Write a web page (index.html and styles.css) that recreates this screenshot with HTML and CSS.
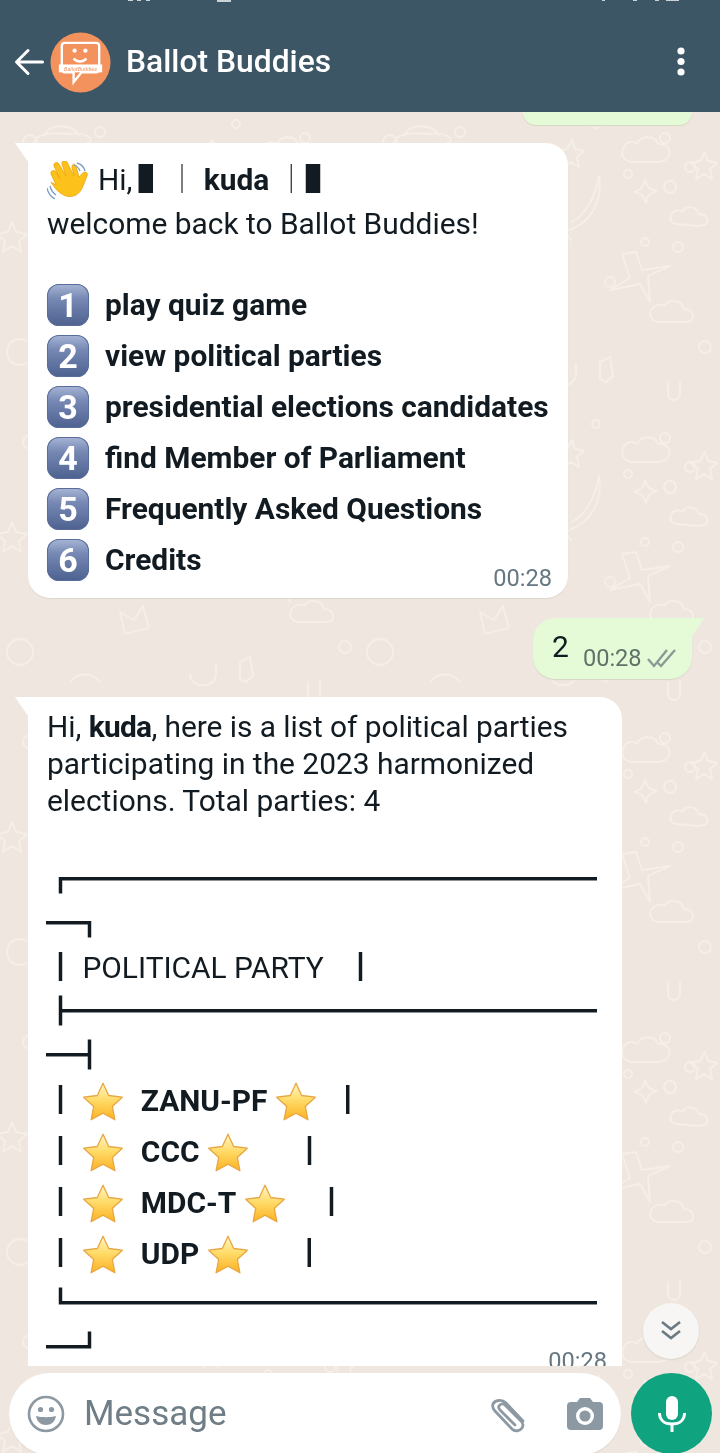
FILE: index.html
```html
<!DOCTYPE html>
<html lang="en">
<head>
<meta charset="utf-8">
<title>Ballot Buddies</title>
<link rel="stylesheet" href="styles.css">
</head>
<body>
<svg class="defs" width="0" height="0" aria-hidden="true">
  <defs>
    <linearGradient id="starFill" x1="0" y1="0" x2="0" y2="1">
      <stop offset="0" stop-color="#fff6c9"/><stop offset=".45" stop-color="#ffdc6a"/><stop offset="1" stop-color="#fcb124"/>
    </linearGradient>
    <symbol id="star" viewBox="0 0 51 40">
      <path d="M21 1.200 L26.700 13.500 L40.300 15.200 L30.300 24.400 L32.900 37.800 L21 31.200 L9.100 37.800 L11.700 24.400 L1.700 15.200 L15.300 13.500 Z" fill="url(#starFill)" stroke="#e9a640" stroke-width="1.300" stroke-linejoin="round"/>
    </symbol>
    <pattern id="doodle" width="360" height="300" patternUnits="userSpaceOnUse">
      <g fill="none" stroke="#f5efe8" stroke-width="1.800" stroke-linejoin="round" stroke-linecap="round">
        <path d="M272 50c-7-1-12-6-9-13 2-7 9-9 14-5 4-9 18-9 21 0 8-1 13 5 11 11-2 5-6 7-11 7z"/>
        <path d="M212 28l3 9 9 2-7 6 2 10-8-5-8 5 2-10-7-6 9-2z"/>
        <path d="M345 40l3 9 9 2-7 6 2 10-8-5-8 5 2-10-7-6 9-2z"/>
        <path d="M285 68c3 8 4 9 12 11-8 3-9 4-11 12-3-8-4-9-12-11 8-3 9-4 11-12z"/>
        <circle cx="305" cy="26" r="5"/><circle cx="310" cy="75" r="6"/><circle cx="236" cy="12" r="4"/><circle cx="30" cy="30" r="7"/><circle cx="100" cy="20" r="5"/>
        <circle cx="268" cy="62" r="4"/><circle cx="330" cy="55" r="5"/><circle cx="285" cy="130" r="4"/><circle cx="318" cy="135" r="5"/>
        <path d="M212 110c14-8 24-26 27-46 4 22-6 46-30 54"/>
        <path d="M65 22c-10-2-25-1-30 6-4 7 12 12 30 10 16-2 28-7 25-12-3-4-14-5-25-4zM45 23c2-12 30-12 34 1"/>
        <path d="M318 112c-6 1-9-4-7-9 2-5 8-6 11-3 4-7 15-6 17 2 7 0 10 5 8 9-2 2-5 3-9 3z"/>
        <path d="M300 210c-7 0-12-5-9-12 3-5 9-7 13-4 6-8 18-6 20 3 7 0 11 6 8 11-2 2-5 2-9 2z"/>
        <path d="M262 142l8 24-20 12 30-6 10 18-2-26 22-10-28 4-6-18z"/>
        <circle cx="250" cy="170" r="5"/><circle cx="345" cy="235" r="6"/><circle cx="60" cy="180" r="6"/><circle cx="20" cy="240" r="13"/>
        <path d="M120 200l14 8 9-14 6 22-24 6z"/><path d="M240 250l10-5 3 19-7 6-6-3zM70 270c8-10 22-10 30 0"/>
        <path d="M190 262c0 15 26 15 26 0v-10M175 120c14-6 30-2 36 8"/>
        <path d="M12 110l4 10 11 2-8 7 2 11-9-6-9 6 2-11-8-7 11-2z"/><path d="M320 270v12c0 8-12 8-12 0v-12"/>
      </g>
    </pattern>
  </defs>
</svg>

<main class="phone">
  <svg class="wallpaper" width="720" height="1341" aria-hidden="true"><rect width="720" height="1341" fill="url(#doodle)"/></svg>

  <header class="appbar">
    <svg class="status" width="720" height="3" aria-hidden="true"><g fill="#c9d2d6"><rect x="128" y="0" width="5" height="1"/><rect x="137" y="0" width="4" height="1"/><rect x="146" y="0" width="4" height="1"/><rect x="217" y="0" width="14" height="2"/><rect x="602" y="0" width="3" height="1"/><rect x="633" y="0" width="4" height="1"/><rect x="655" y="0" width="4" height="1"/><rect x="666" y="0" width="13" height="1"/></g></svg>
    <div class="bar-row">
      <svg class="back" width="30" height="30" viewBox="0 0 30 30"><path d="M28.500 15H3M14 3.500 2.500 15 14 26.500" fill="none" stroke="#fff" stroke-width="3" stroke-linecap="round" stroke-linejoin="round"/></svg>
      <svg class="avatar" width="61" height="61" viewBox="0 0 62 62">
        <circle cx="31" cy="31" r="30.500" fill="#f3925c"/>
        <path d="M15 11h32a3 3 0 0 1 3 3v24a3 3 0 0 1-3 3H32l-8 10v-10h-9a3 3 0 0 1-3-3V14a3 3 0 0 1 3-3z" fill="none" stroke="#fff" stroke-width="2.400"/>
        <circle cx="25" cy="19" r="2.200" fill="#fff"/><circle cx="36" cy="19" r="2.200" fill="#fff"/>
        <path d="M24 27c3 4 10 4 13 0" fill="none" stroke="#fff" stroke-width="2.400"/>
        <rect x="9" y="33" width="44" height="8" fill="#fff"/>
        <text class="avatar-text" x="31" y="39.500" text-anchor="middle">BallotBuddies</text>
      </svg>
      <h1 class="title">Ballot Buddies</h1>
      <svg class="more" width="8" height="30" viewBox="0 0 8 30"><circle cx="4" cy="4" r="3.600" fill="#fff"/><circle cx="4" cy="14.500" r="3.600" fill="#fff"/><circle cx="4" cy="25" r="3.600" fill="#fff"/></svg>
    </div>
  </header>

  <section class="chat">
    <div class="bubble out stub"></div>

    <article class="bubble in menu">
      <div class="greet"><svg class="emoji" width="51" height="42" viewBox="2 0 51 42">
          <path d="M11 24 6 13c-1-3 3-5 5-2l4 7-6-13c-1-3 3-5 5-2l7 12-4-12c-1-3 3-4 5-2l7 14-2-9c-.5-3 3-4 4-1l3 11c2-2 4-5 6-5 2 0 3 2 2 4l-4 10c-3 8-9 12-17 10-6-2-11-7-15-14z" fill="#fcc21b" stroke="#e9a311" stroke-width=".800"/>
          <path d="M2 27c1 5 4 9 8 11M5 25c1 4 3 7 6 9M32 2c4 1 7 4 8 8M29 4c3 1 5 3 6 6" fill="none" stroke="#7d9cc4" stroke-width="1.300"/>
        </svg>Hi, <span class="box lead">▌│</span> <b>kuda</b> <span class="box">│▌</span></div>
      <div class="line">welcome back to Ballot Buddies!</div>
      <div class="line">&nbsp;</div>
      <div class="opt"><span class="key">1</span><b>play quiz game</b></div>
      <div class="opt"><span class="key">2</span><b>view political parties</b></div>
      <div class="opt"><span class="key">3</span><b>presidential elections candidates</b></div>
      <div class="opt"><span class="key">4</span><b>find Member of Parliament</b></div>
      <div class="opt"><span class="key">5</span><b>Frequently Asked Questions</b></div>
      <div class="opt"><span class="key">6</span><b>Credits</b></div>
      <time class="time">00:28</time>
    </article>

    <article class="bubble out reply">
      <span class="reply-text">2</span>
      <time class="time sent">00:28</time>
      <svg class="ticks" width="30" height="20" viewBox="0 0 30 20"><path d="M1 11l6 7L20 2M11 15l3 3L28 2" fill="none" stroke="#8b9a94" stroke-width="2.400"/></svg>
    </article>

    <article class="bubble in parties">
      <div class="line tight">Hi, <b>kuda</b>, here is a list of political parties</div>
      <div class="line">participating in the 2023 harmonized</div>
      <div class="line">elections. Total parties: 4</div>
      <div class="line gap">&nbsp;</div>
      <div class="tline"><span class="box">┏━━━━━━━━━━━━━━━━━━</span></div>
      <div class="tline"><span class="box">━┓</span></div>
      <div class="tline"><span class="box">┃</span> POLITICAL PARTY   <span class="box">┃</span></div>
      <div class="tline"><span class="box">┣━━━━━━━━━━━━━━━━━━</span></div>
      <div class="tline short"><span class="box">━┫</span></div>
      <div class="trow"><span class="box">┃</span> <svg class="emoji" width="51" height="40"><use href="#star"/></svg> <b>ZANU-PF</b> <svg class="emoji" width="51" height="40"><use href="#star"/></svg> <span class="box">┃</span></div>
      <div class="trow"><span class="box">┃</span> <svg class="emoji" width="51" height="40"><use href="#star"/></svg> <b>CCC</b> <svg class="emoji" width="51" height="40"><use href="#star"/></svg>     <span class="box">┃</span></div>
      <div class="trow"><span class="box">┃</span> <svg class="emoji" width="51" height="40"><use href="#star"/></svg> <b>MDC-T</b> <svg class="emoji" width="51" height="40"><use href="#star"/></svg>   <span class="box">┃</span></div>
      <div class="trow"><span class="box">┃</span> <svg class="emoji" width="51" height="40"><use href="#star"/></svg> <b>UDP</b> <svg class="emoji" width="51" height="40"><use href="#star"/></svg>     <span class="box">┃</span></div>
      <div class="tline"><span class="box">┗━━━━━━━━━━━━━━━━━━</span></div>
      <div class="tline"><span class="box">━┛</span></div>
      <time class="time clipped">00:28</time>
    </article>

    <button class="scroll-down" aria-label="Scroll to bottom">
      <svg width="24" height="24" viewBox="0 0 24 24"><path d="M3 3l9 7 9-7M3 12l9 7 9-7" fill="none" stroke="#6b7a82" stroke-width="2.600"/></svg>
    </button>
  </section>

  <footer class="composer">
    <div class="field">
      <svg class="smile" width="38" height="38" viewBox="0 0 38 38"><circle cx="19" cy="19" r="17" fill="none" stroke="#8c99a3" stroke-width="2.600"/><circle cx="13.500" cy="14.500" r="2.600" fill="#8c99a3"/><circle cx="24.500" cy="14.500" r="2.600" fill="#8c99a3"/><path d="M9 21c6 1.600 14 1.600 20 0-1 6-5 9-10 9s-9-3-10-9z" fill="#8c99a3"/></svg>
      <span class="placeholder">Message</span>
      <svg class="clip" width="38" height="38" viewBox="0 0 38 38"><path d="M34 26 17 8C13 4 6 5 4 9c-1 3 0 5 2 7l17 18c3 3 8 2 10-1s1-5-1-7L16 10c-2-2-5-1-6 1s0 3 1 4l15 15" fill="none" stroke="#8c99a3" stroke-width="2.800" stroke-linecap="round"/></svg>
      <svg class="camera" width="36" height="32" viewBox="0 0 36 32"><path d="M4 4h6l3-4h10l3 4h6a4 4 0 0 1 4 4v20a4 4 0 0 1-4 4H4a4 4 0 0 1-4-4V8a4 4 0 0 1 4-4z" fill="#8c99a3"/><circle cx="18" cy="18" r="9" fill="#fff"/><circle cx="18" cy="18" r="5.600" fill="#8c99a3"/></svg>
    </div>
    <button class="mic" aria-label="Record voice message">
      <svg width="28" height="36" viewBox="0 0 28 36"><rect x="8" y="0" width="12" height="24" rx="6" fill="#fff"/><path d="M1.500 17c0 7 5 11 12.500 11s12.500-4 12.500-11M14 28v8" fill="none" stroke="#fff" stroke-width="3"/></svg>
    </button>
  </footer>
</main>
</body>
</html>
```

FILE: styles.css
```css
* { box-sizing: border-box; }
html, body { margin: 0; padding: 0; }
body { font-family: Roboto, "Noto Sans CJK SC", sans-serif; color: #111b21; background: #efe7df; }
.defs { position: absolute; }

.phone { position: relative; width: 720px; height: 1453px; display: flex; flex-direction: column; overflow: hidden; background: #efe7df; }
.wallpaper { position: absolute; left: 0; top: 112px; z-index: 0; }

.appbar { position: relative; height: 112px; flex: none; background: #3d5665; color: #fff; z-index: 1; }
.status { display: block; height: 3px; margin-bottom: -3px; }
.bar-row { display: flex; align-items: center; height: 124px; padding: 0 35px 0 14px; will-change: transform; }
.back { flex: none; }
.avatar { flex: none; margin: 0 0 0 6px; }
.avatar-text { font: italic 5.600px Roboto, sans-serif; fill: #f3925c; }
.title { flex: 1; margin: 0 0 0 15px; font-size: 31.800px; font-weight: 500; line-height: 1; }
.more { flex: none; }

.chat { position: relative; z-index: 1; flex: none; height: 1254px; overflow: hidden; display: flex; flex-direction: column; will-change: transform; }
.bubble { position: relative; background: #fff; flex: none; }
.in { align-self: flex-start; margin-left: 28px; border-radius: 0 22px 22px 22px; }
.in::before { content: ""; position: absolute; left: -13px; top: 0; width: 14px; height: 20px; background: inherit; clip-path: polygon(0 0, 100% 0, 100% 100%); }
.out { align-self: flex-end; margin-right: 28px; background: #e5fbd8; }

.stub { width: 169px; height: 13px; border-radius: 0 0 20px 20px; box-shadow: 0 1px 1px #d8d5c4; }

.menu { width: 540px; height: 455px; margin-top: 18px; padding: 12px 16px 0 19px; box-shadow: 0 1px 1px #ddd6cd; }
.greet { height: 50px; line-height: 50px; font-size: 29.900px; white-space: pre; }
.line { height: 37px; line-height: 37px; font-size: 29.900px; white-space: pre; }
.line.tight { letter-spacing: -.06px; }
.line.tight b { letter-spacing: -.7px; }
.line.gap { height: 39px; }
.opt { display: flex; align-items: center; height: 51px; font-size: 29.900px; }
.opt b { font-weight: 700; }
.key { flex: none; width: 42px; height: 42px; margin-right: 16px; border-radius: 12px; background: linear-gradient(#a8b6d6 0, #7688b3 35%, #4d6190 100%); color: #fff; font-size: 34px; font-weight: 700; line-height: 42px; text-align: center; box-shadow: inset 0 0 0 1px #5a6d9a; }
.emoji { vertical-align: middle; }
.trow .emoji { margin-top: -2px; }
.greet .emoji { margin-top: 0; }
.box { font-family: "Noto Sans CJK SC", sans-serif; font-size: 29px; line-height: 1; font-weight: 400; }
.box.lead { margin-left: -1.500px; }

.time { display: block; text-align: right; font-size: 23.600px; line-height: 26px; color: #667781; margin-top: -20px; }

.reply { display: flex; align-items: flex-start; width: 159px; height: 61px; margin-top: 20px; padding: 0 15px 0 19px; border-radius: 22px 0 22px 22px; box-shadow: 0 1px 1px #d8d5c4; }
.reply::before { content: ""; position: absolute; right: -12px; top: 0; width: 13px; height: 20px; background: inherit; clip-path: polygon(0 0, 100% 0, 0 100%); }
.reply-text { font-size: 30px; line-height: 36px; margin-top: 11px; }
.time.sent { margin: 27px 0 0 14px; color: #5f7368; }
.ticks { margin: 30px 0 0 5px; flex: none; }

.parties { width: 594px; height: 700px; margin-top: 18px; padding: 11px 18px 0 19px; border-radius: 0 22px 0 0; }
.tline { height: 44px; line-height: 44px; font-size: 29.900px; white-space: pre; margin-left: -1px; }
.tline.short { height: 41px; }
.trow { height: 51px; line-height: 51px; font-size: 29.900px; white-space: pre; margin-left: -1px; }
.trow b { font-weight: 700; }
.trow + .tline { margin-top: 3px; }
.clipped { margin-top: -22px; margin-right: -3px; }

.scroll-down { position: absolute; right: 21px; bottom: 7px; width: 56px; height: 56px; border: 0; border-radius: 50%; background: #f7f6f4; padding: 0; display: flex; align-items: center; justify-content: center; box-shadow: 0 1px 2px #d9d2c9; }

.composer { position: relative; z-index: 1; flex: none; height: 87px; display: flex; padding: 7px 8px 0 9px; gap: 10px; will-change: transform; }
.field { flex: 1; height: 82px; display: flex; align-items: center; padding: 0 18px 1px 18px; border-radius: 41px; background: #fff; box-shadow: 0 1px 1px #ddd6cd; }
.smile { flex: none; }
.placeholder { flex: 1; margin-left: 19px; font-size: 35px; color: #6f7d86; }
.clip { flex: none; margin-right: 40px; }
.camera { flex: none; }
.mic { flex: none; width: 81px; height: 81px; border: 0; padding: 0; border-radius: 50%; background: #10a37f; display: flex; align-items: center; justify-content: center; }
```
